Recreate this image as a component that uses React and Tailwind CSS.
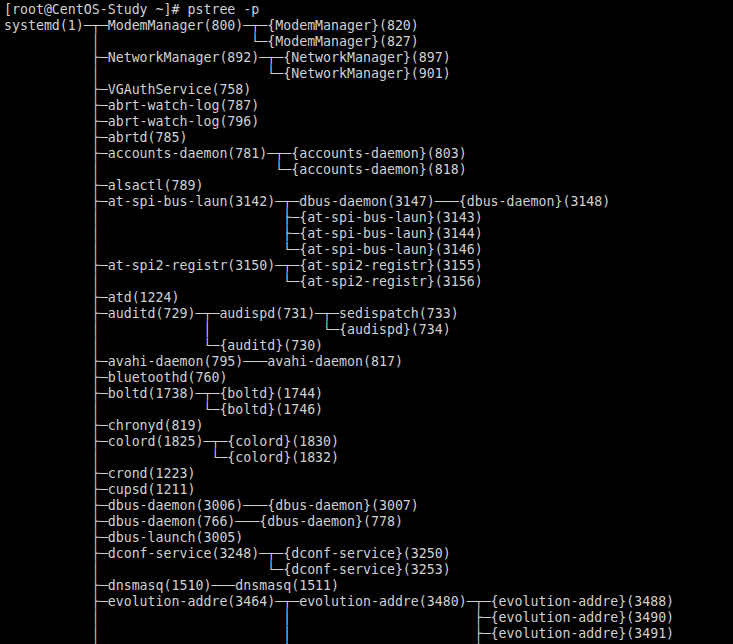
const lines = [
  "[root@CentOS-Study ~]# pstree -p",
  "systemd(1)─┬─ModemManager(800)─┬─{ModemManager}(820)",
  "           │                   └─{ModemManager}(827)",
  "           ├─NetworkManager(892)─┬─{NetworkManager}(897)",
  "           │                     └─{NetworkManager}(901)",
  "           ├─VGAuthService(758)",
  "           ├─abrt-watch-log(787)",
  "           ├─abrt-watch-log(796)",
  "           ├─abrtd(785)",
  "           ├─accounts-daemon(781)─┬─{accounts-daemon}(803)",
  "           │                      └─{accounts-daemon}(818)",
  "           ├─alsactl(789)",
  "           ├─at-spi-bus-laun(3142)─┬─dbus-daemon(3147)───{dbus-daemon}(3148)",
  "           │                       ├─{at-spi-bus-laun}(3143)",
  "           │                       ├─{at-spi-bus-laun}(3144)",
  "           │                       └─{at-spi-bus-laun}(3146)",
  "           ├─at-spi2-registr(3150)─┬─{at-spi2-registr}(3155)",
  "           │                       └─{at-spi2-registr}(3156)",
  "           ├─atd(1224)",
  "           ├─auditd(729)─┬─audispd(731)─┬─sedispatch(733)",
  "           │             │              └─{audispd}(734)",
  "           │             └─{auditd}(730)",
  "           ├─avahi-daemon(795)───avahi-daemon(817)",
  "           ├─bluetoothd(760)",
  "           ├─boltd(1738)─┬─{boltd}(1744)",
  "           │             └─{boltd}(1746)",
  "           ├─chronyd(819)",
  "           ├─colord(1825)─┬─{colord}(1830)",
  "           │              └─{colord}(1832)",
  "           ├─crond(1223)",
  "           ├─cupsd(1211)",
  "           ├─dbus-daemon(3006)───{dbus-daemon}(3007)",
  "           ├─dbus-daemon(766)───{dbus-daemon}(778)",
  "           ├─dbus-launch(3005)",
  "           ├─dconf-service(3248)─┬─{dconf-service}(3250)",
  "           │                     └─{dconf-service}(3253)",
  "           ├─dnsmasq(1510)───dnsmasq(1511)",
  "           ├─evolution-addre(3464)─┬─evolution-addre(3480)─┬─{evolution-addre}(3488)",
  "           │                       │                       ├─{evolution-addre}(3490)",
  "           │                       │                       ├─{evolution-addre}(3491)",
  "           │                       │                       │",
];

export default function App() {
  return (
    <div className="h-[644px] w-[733px] overflow-hidden bg-black pl-[4px] pt-[2px]">
      <pre className="m-0 font-['DejaVu_Sans_Mono',monospace] text-[13.25px] leading-[16px] text-[#d0d0d0]">
        {lines.map((l, i) => (
          <div key={i} className="h-[16px] whitespace-pre">
            {l}
          </div>
        ))}
      </pre>
    </div>
  );
}
